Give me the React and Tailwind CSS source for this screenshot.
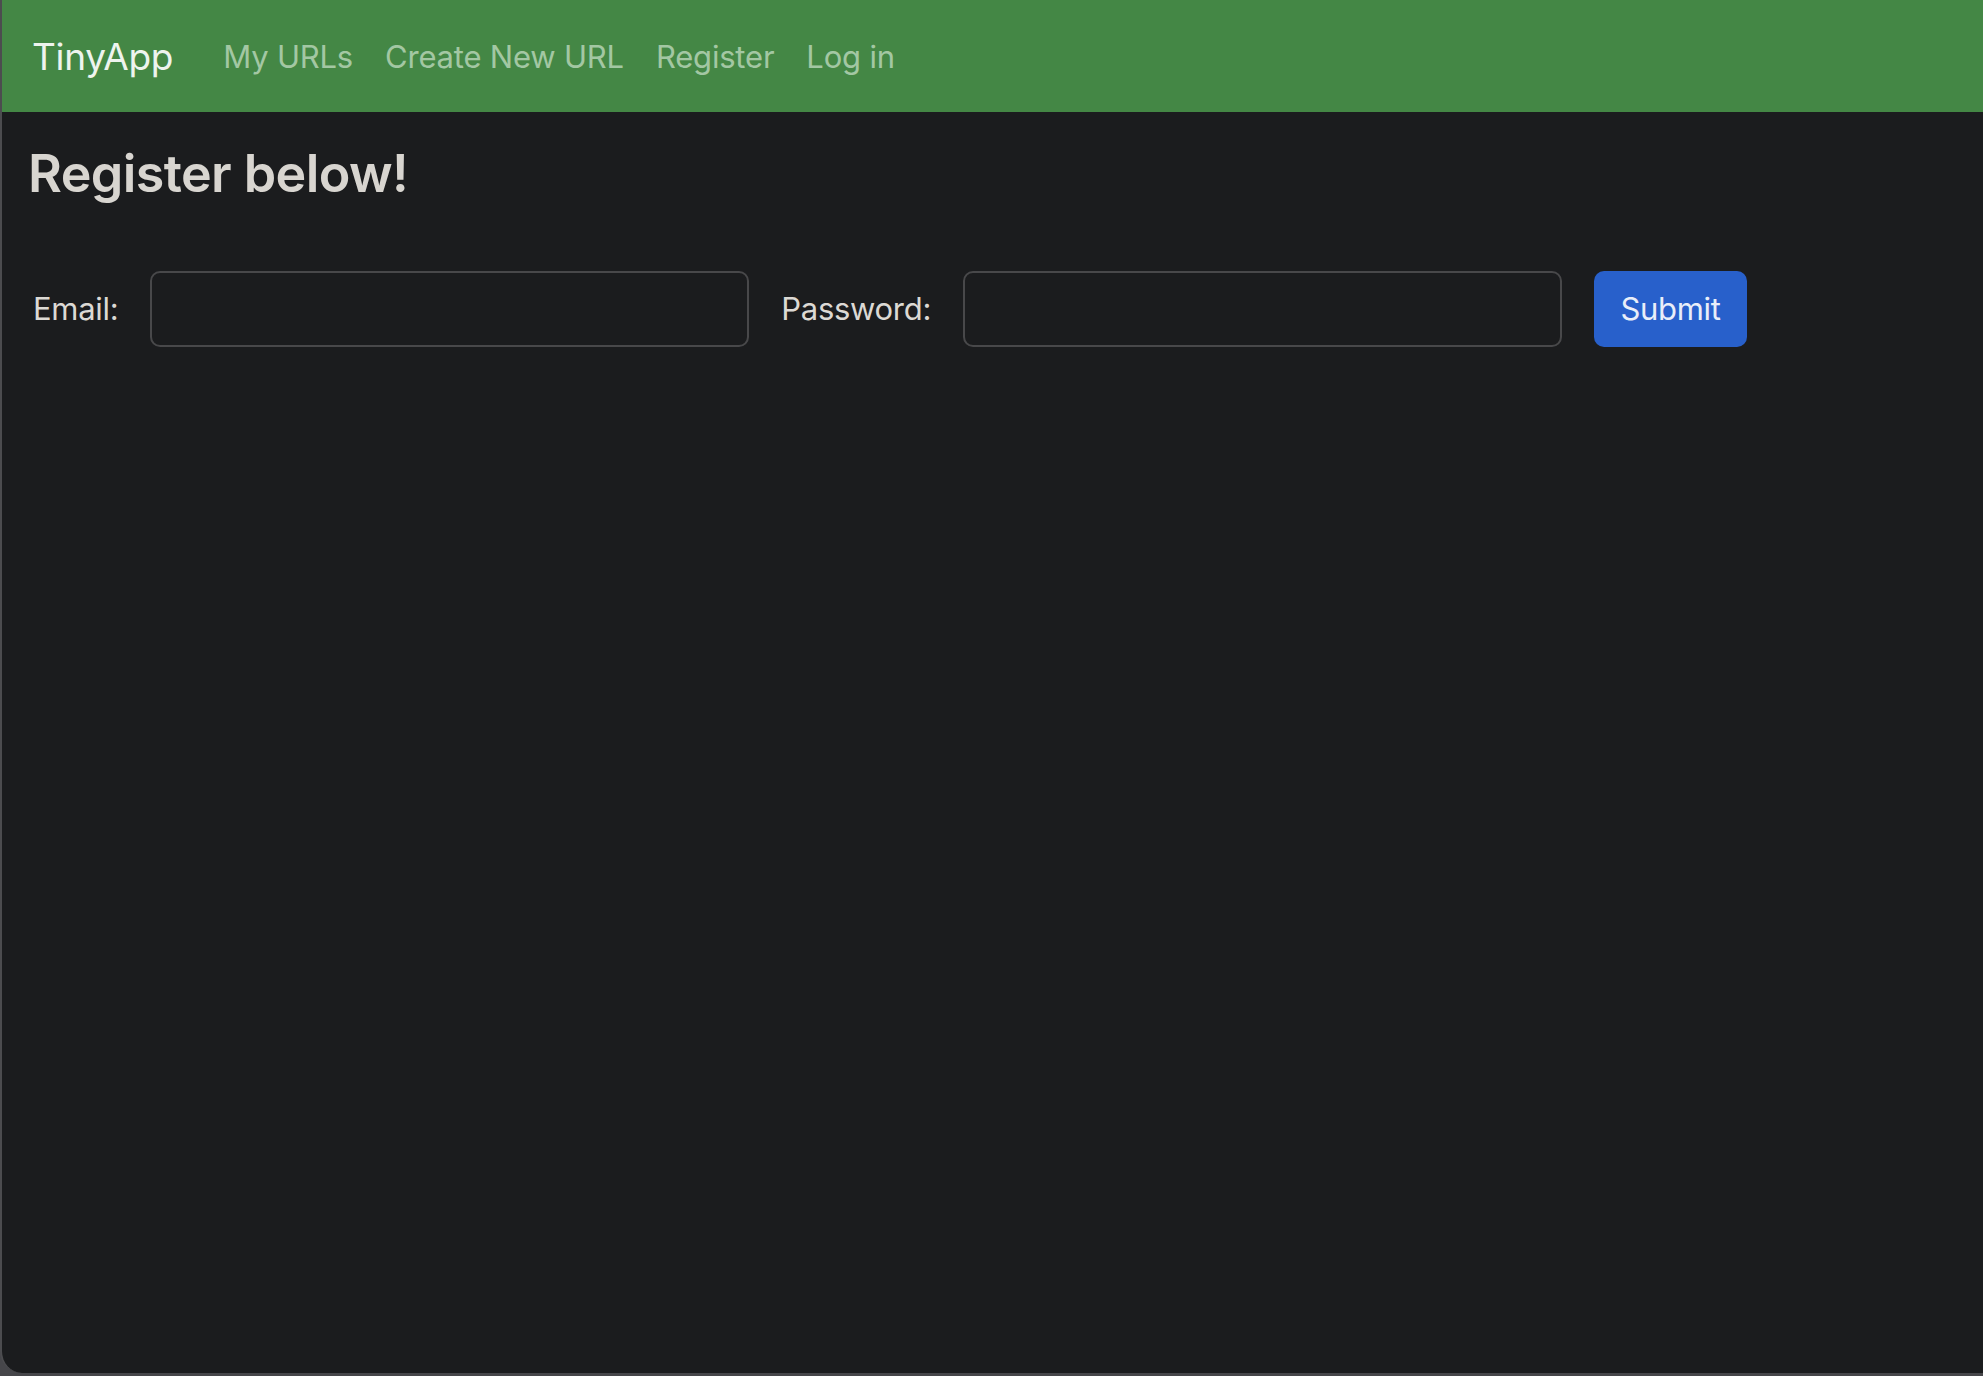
import React from "react";

const links = ["My URLs", "Create New URL", "Register", "Log in"];

function Navbar() {
  return (
    <nav className="flex h-[112px] shrink-0 items-center bg-[#448745] pl-[30px]">
      <a className="mr-[34px] text-[37px] leading-none tracking-[-0.3px] text-[#eef4ee]" href="#">
        TinyApp
      </a>
      <div className="flex items-center">
        {links.map((l) => (
          <a key={l} className="px-[16px] text-[31px] leading-none tracking-[-0.2px] text-[#a3c7a3]" href="#">
            {l}
          </a>
        ))}
      </div>
    </nav>
  );
}

function RegisterForm() {
  return (
    <form className="mt-[63px] flex items-center gap-[32px] pl-[31px]">
      <label className="text-[31px] tracking-[-0.3px] text-[#dcd9d4]">Email:</label>
      <input
        type="email"
        className="h-[76px] w-[599px] rounded-[10px] border-2 border-[#48484a] bg-[#1b1c1e]"
      />
      <label className="text-[31px] tracking-[-0.3px] text-[#dcd9d4]">Password:</label>
      <input
        type="password"
        className="h-[76px] w-[599px] rounded-[10px] border-2 border-[#48484a] bg-[#1b1c1e]"
      />
      <button
        type="button"
        className="h-[76px] w-[153px] rounded-[10px] bg-[#2860cb] text-[31px] tracking-[-0.3px] text-[#e9eef9]"
      >
        Submit
      </button>
    </form>
  );
}

export default function App() {
  return (
    <div
      className="h-[1376px] w-[1983px] overflow-hidden bg-[#46464a]"
      style={{ fontFamily: "Inter, 'Liberation Sans', sans-serif" }}
    >
      <div className="flex h-[1373px] flex-col overflow-hidden rounded-bl-[22px] border-l-2 border-[#4c4c4f] bg-[#1b1c1e]">
        <Navbar />
        <main className="flex-1">
          <h2 className="pl-[26px] pt-[28px] text-[52px] font-semibold leading-[68px] tracking-[-0.6px] text-[#d8d5d0]">
            Register below!
          </h2>
          <RegisterForm />
        </main>
      </div>
    </div>
  );
}
